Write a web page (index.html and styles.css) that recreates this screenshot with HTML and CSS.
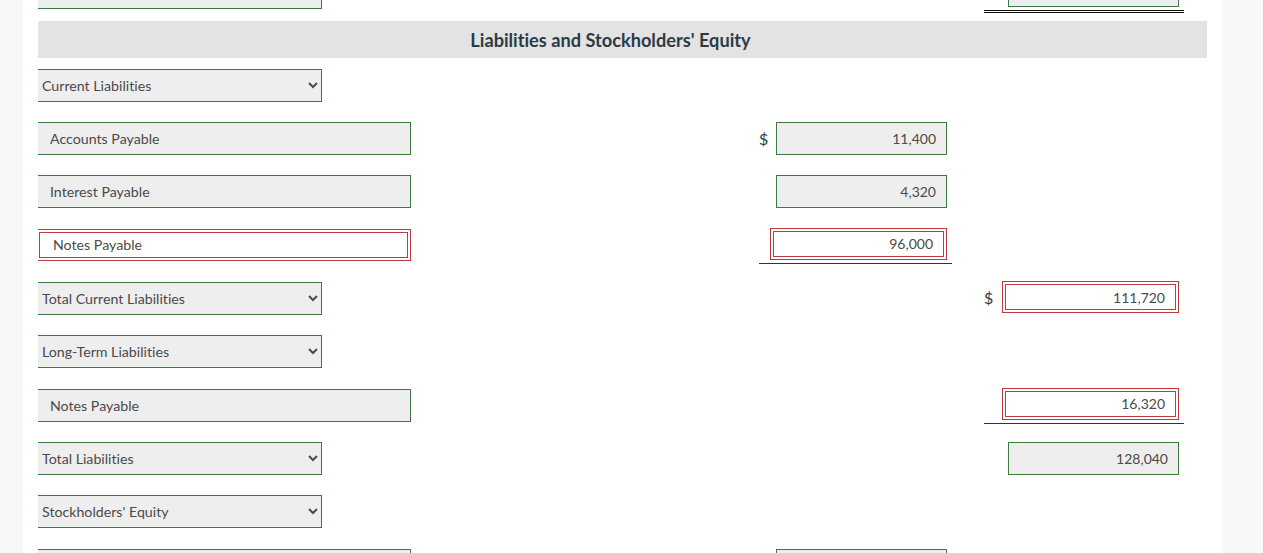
FILE: index.html
```html
<!DOCTYPE html>
<html>
<head>
<meta charset="utf-8">
<link rel="stylesheet" href="styles.css">
</head>
<body>
<div class="page">
  <div class="sheet">
    <div class="row row-top">
      <select class="sel"><option></option></select>
      <div class="amt amt2 under2 lift">
        <div class="box"></div>
      </div>
    </div>

    <div class="head">Liabilities and Stockholders' Equity</div>

    <div class="row">
      <select class="sel"><option>Current Liabilities</option></select>
    </div>

    <div class="row">
      <div class="label">Accounts Payable</div>
      <div class="amt amt1">
        <span class="dollar">$</span>
        <div class="box">11,400</div>
      </div>
    </div>

    <div class="row">
      <div class="label">Interest Payable</div>
      <div class="amt amt1">
        <div class="box">4,320</div>
      </div>
    </div>

    <div class="row">
      <div class="label bad">Notes Payable</div>
      <div class="amt amt1 under">
        <div class="box bad">96,000</div>
      </div>
    </div>

    <div class="row">
      <select class="sel"><option>Total Current Liabilities</option></select>
      <div class="amt amt2">
        <span class="dollar">$</span>
        <div class="box bad">111,720</div>
      </div>
    </div>

    <div class="row">
      <select class="sel"><option>Long-Term Liabilities</option></select>
    </div>

    <div class="row">
      <div class="label">Notes Payable</div>
      <div class="amt amt2 under">
        <div class="box bad">16,320</div>
      </div>
    </div>

    <div class="row">
      <select class="sel"><option>Total Liabilities</option></select>
      <div class="amt amt2">
        <div class="box">128,040</div>
      </div>
    </div>

    <div class="row">
      <select class="sel"><option>Stockholders' Equity</option></select>
    </div>

    <div class="row">
      <div class="label"></div>
      <div class="amt amt1">
        <div class="box"></div>
      </div>
    </div>
  </div>
</div>
</body>
</html>
```

FILE: styles.css
```css
html {
  overflow: hidden;
}

body {
  margin: 0;
  background: #f8f8f8;
  font-family: Lato, "Noto Sans", sans-serif;
  font-variant-ligatures: none;
}

.page {
  margin-left: 23px;
  width: 1199px;
  min-height: 100vh;
  background: #ffffff;
}

.sheet {
  margin: 0 15px;
  overflow: hidden;
}

.row {
  display: grid;
  grid-template-columns: 721px 193px 32px 200px;
  align-items: start;
  height: 53.333px;
  padding-top: 10.5px;
  box-sizing: border-box;
}

.row-top {
  margin-top: -34.5px;
}

.head {
  margin-top: 2.167px;
  height: 37.333px;
  background: #e3e3e3;
  display: flex;
  align-items: center;
  justify-content: center;
  padding-right: 24px;
  font-weight: 700;
  font-size: 18.2px;
  color: #2d3b45;
}

.sel {
  grid-column: 1;
  margin: 0 0 0 -2px;
  width: 286px;
  height: 33px;
  box-sizing: border-box;
  border: 1px solid #3b7b40;
  border-radius: 0;
  background-color: #eeeeee;
  color: #4a4a4a;
  font-family: Lato, "Noto Sans", sans-serif;
  font-variant-ligatures: none;
  font-size: 14.2px;
  padding: 0 0 0 1px;
  outline: none;
}

.label {
  grid-column: 1;
  margin-left: -2px;
  width: 375px;
  height: 33px;
  box-sizing: border-box;
  border: 1px solid #3b7b40;
  background: #eeeeee;
  color: #4a4a4a;
  font-size: 14.2px;
  display: flex;
  align-items: center;
  padding-left: 13px;
}

.label.bad {
  height: 32px;
  background: #ffffff;
  border-color: #c0393f;
  box-shadow: inset 0 0 0 2px #ffffff, inset 0 0 0 3px #c0393f;
  padding-left: 16px;
}

.amt {
  display: flex;
  align-items: center;
  padding-right: 5px;
}

.amt1 {
  grid-column: 2;
}

.amt2 {
  grid-column: 4;
}

.under {
  border-bottom: 1px solid #333333;
  padding-bottom: 3px;
}

.under2 {
  border-bottom: 3px double #111111;
  padding-bottom: 3px;
}

.lift {
  margin-top: -2px;
}

.dollar {
  font-size: 16px;
  color: #2d3b45;
  line-height: 1;
}

.box {
  margin-left: auto;
  width: 171px;
  height: 33px;
  box-sizing: border-box;
  border: 1px solid #3b7b40;
  background: #eeeeee;
  color: #4a4a4a;
  font-size: 14px;
  display: flex;
  align-items: center;
  justify-content: flex-end;
  padding-right: 10px;
}

.box.bad {
  width: 177px;
  height: 32px;
  margin-top: -1px;
  background: #ffffff;
  border-color: #c0393f;
  box-shadow: inset 0 0 0 2px #ffffff, inset 0 0 0 3px #c0393f;
  padding-right: 13px;
}
```
